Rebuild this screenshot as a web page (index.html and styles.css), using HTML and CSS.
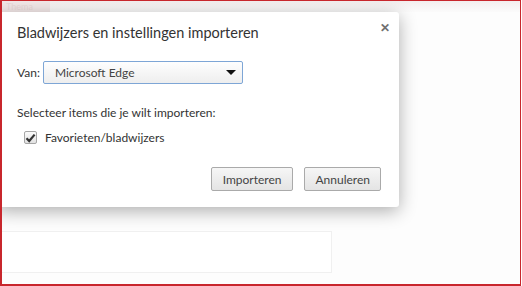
FILE: index.html
```html
<!DOCTYPE html>
<html lang="nl">
<head>
    <meta charset="UTF-8">
    <title>Bladwijzers en instellingen importeren</title>
    <link rel="stylesheet" href="styles.css">
</head>
<body>
    <div class="frame">
        <div class="page">
            <div class="tab-strip"><span class="tab">Thema</span></div>
            <div class="section-box"></div>
        </div>

        <div class="dialog">
            <div class="dialog-head">
                <h1>Bladwijzers en instellingen importeren</h1>
                <span class="close">&#x2715;</span>
            </div>

            <div class="row-from">
                <label>Van:</label>
                <div class="select">
                    <span>Microsoft Edge</span>
                    <span class="arrow"></span>
                </div>
            </div>

            <p class="hint">Selecteer items die je wilt importeren:</p>

            <div class="check-row">
                <span class="checkbox">
                    <svg width="11" height="10" viewBox="0 0 11 10"><path d="M1.5 5.2 L4.2 8 L9.6 1.6" fill="none" stroke="#333" stroke-width="2.2"/></svg>
                </span>
                <span>Favorieten/bladwijzers</span>
            </div>

            <div class="actions">
                <button class="btn btn-import">Importeren</button>
                <button class="btn">Annuleren</button>
            </div>
        </div>
    </div>
</body>
</html>
```

FILE: styles.css
```css
body {
    margin: 0;
    font-family: Lato, "Open Sans", sans-serif;
    color: #333;
    background: #fff;
}
.frame {
    position: relative;
    box-sizing: border-box;
    width: 521px;
    height: 286px;
    border: 1px solid #c8262c;
    border-left-width: 2px;
    border-bottom-width: 2px;
    overflow: hidden;
    background: #fdfdfd;
}
.page {
    display: flex;
    flex-direction: column;
}
.tab-strip {
    height: 11px;
    display: flex;
    background: linear-gradient(#f4eeee, #fbfbfb);
}
.tab {
    width: 44px;
    font-size: 9px;
    line-height: 11px;
    color: #ead8d8;
    padding-left: 4px;
    background: #f3e8e8;
}
.section-box {
    margin-top: 219px;
    width: 329px;
    height: 40px;
    border: 1px solid #f0f0f0;
    border-left: none;
    background: #fff;
}
.dialog {
    position: absolute;
    left: -6px;
    top: 11px;
    width: 403px;
    height: 195px;
    box-sizing: border-box;
    padding: 0 18px 0 21px;
    background: #fff;
    border-radius: 3px;
    box-shadow: 0 4px 18px rgba(0, 0, 0, 0.32);
    font-size: 12px;
}
.dialog-head {
    display: flex;
    justify-content: space-between;
    align-items: flex-start;
    height: 38px;
}
.dialog-head h1 {
    margin: 12px 0 0 0;
    font-size: 14.5px;
    font-weight: 400;
    color: #333;
}
.close {
    margin-top: 8px;
    margin-right: -9px;
    font-size: 12px;
    font-weight: 700;
    color: #707070;
}
.row-from {
    margin-top: 11px;
    display: flex;
    align-items: center;
    gap: 3px;
}
.select {
    width: 200px;
    height: 23px;
    box-sizing: border-box;
    border: 1px solid #7ea6d6;
    border-radius: 2px;
    background: linear-gradient(#fefefe, #eeeeee);
    display: flex;
    align-items: center;
    justify-content: space-between;
    padding: 0 6px 0 11px;
    color: #444;
}
.arrow {
    width: 0;
    height: 0;
    border-left: 5px solid transparent;
    border-right: 5px solid transparent;
    border-top: 5px solid #111;
}
.hint {
    margin: 20px 0 0 0;
    line-height: 18px;
}
.check-row {
    margin-top: 8px;
    margin-left: 7px;
    display: flex;
    align-items: center;
    gap: 8px;
}
.checkbox {
    width: 13px;
    height: 13px;
    box-sizing: border-box;
    border: 1px solid #a6a6a6;
    border-radius: 2px;
    background: linear-gradient(#fafafa, #e2e2e2);
    display: flex;
    align-items: center;
    justify-content: center;
}
.actions {
    margin-top: 22px;
    display: flex;
    justify-content: flex-end;
    gap: 11px;
}
.btn {
    height: 24px;
    padding: 0 10px;
    font-family: inherit;
    font-size: 12px;
    color: #444;
    border: 1px solid #aaa;
    border-radius: 2px;
    background: linear-gradient(#f6f6f6, #e4e4e4);
}
.btn-import {
    padding: 0 11px;
}
```
